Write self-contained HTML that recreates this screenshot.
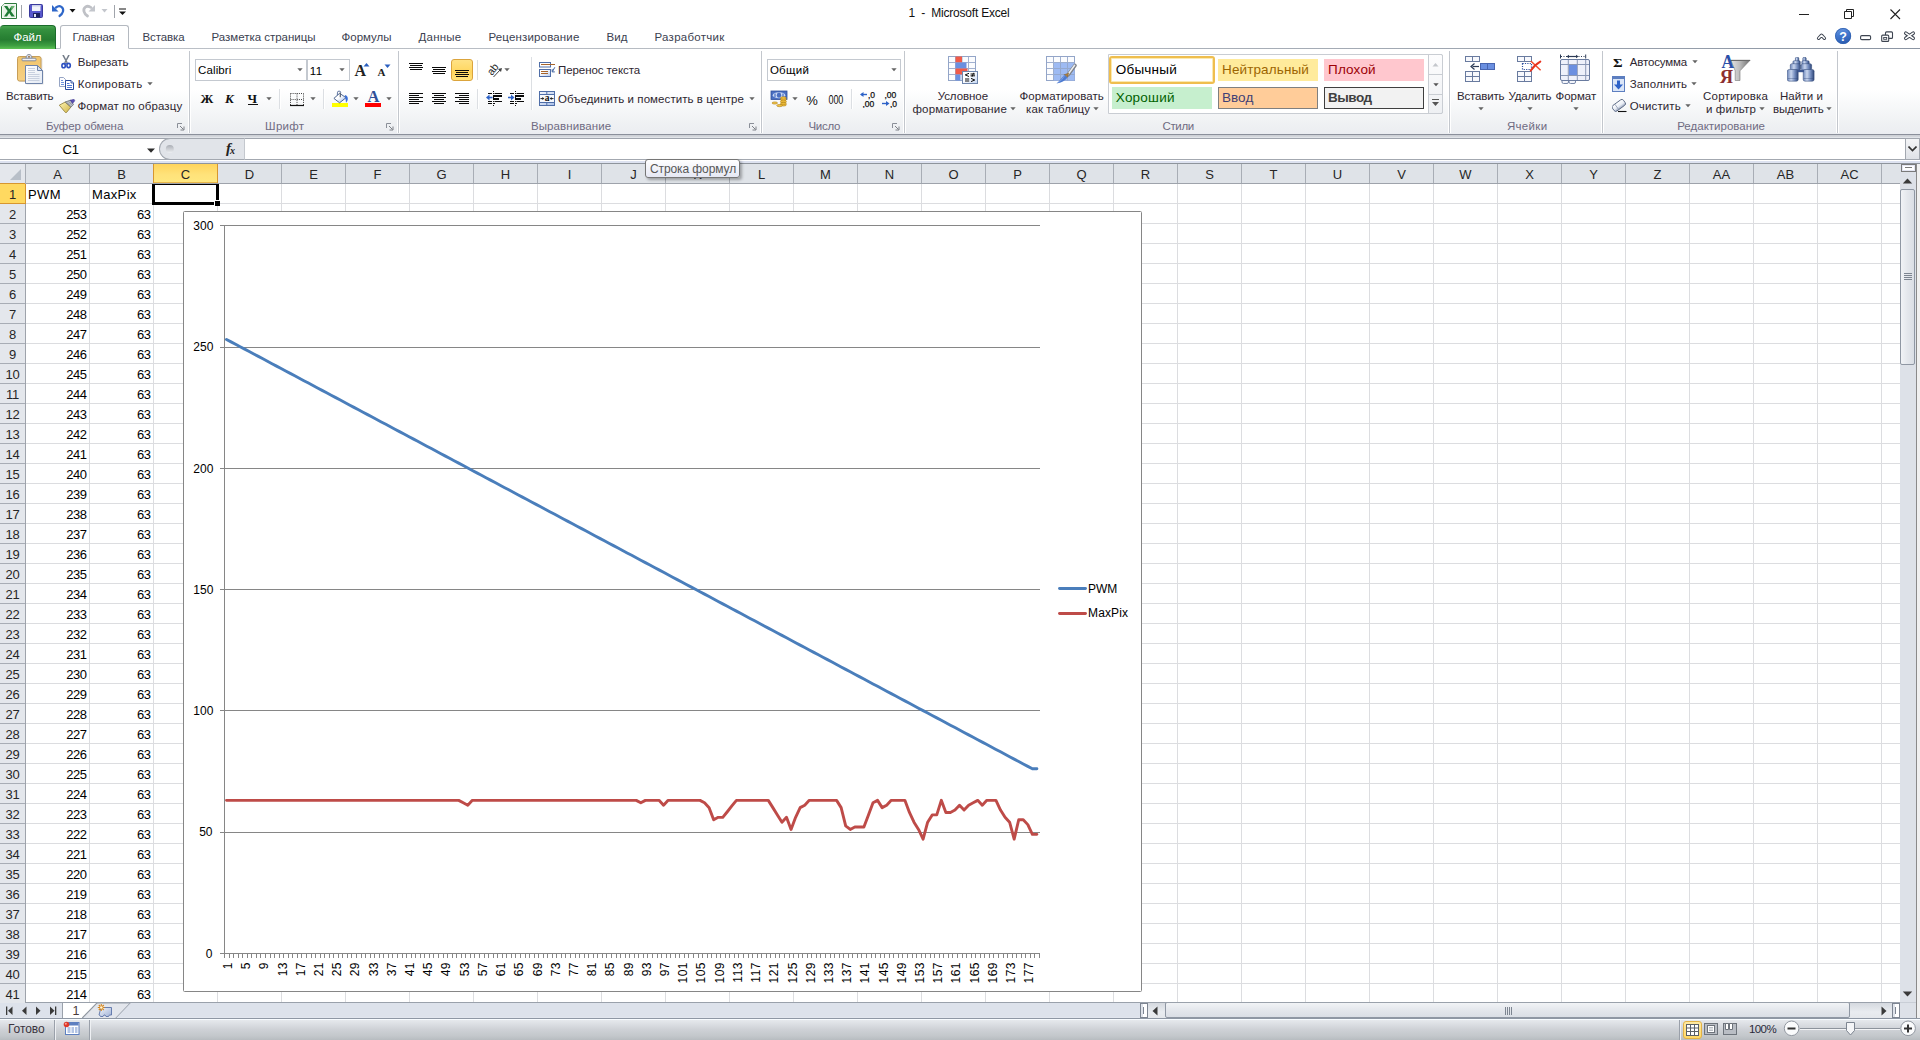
<!DOCTYPE html>
<html><head><meta charset="utf-8"><title>1 - Microsoft Excel</title>
<style>
*{box-sizing:border-box;margin:0;padding:0}
html,body{width:1920px;height:1040px;overflow:hidden;background:#fff;font-family:"Liberation Sans",sans-serif;font-size:12px}
.t{position:absolute;white-space:pre;}
.ct{font-family:"Liberation Sans",sans-serif;font-size:12px;fill:#000}
.a{position:absolute;display:block}
#title{position:absolute;left:0;top:0;width:1920px;height:25px;background:#fff}
#tabs{position:absolute;left:0;top:25px;width:1920px;height:24px;background:#fff;border-bottom:1px solid #b4b9c0;border-image:linear-gradient(90deg,#bcc1c8,#b4b9c0 50%,#8b95a3) 1}
#tabs .t,#tabs .a{margin-top:-25px}
#filetab{position:absolute;left:0;top:0;width:56px;height:24px;border-radius:4px 4px 0 0;background:linear-gradient(#48a54f 0,#35913f 15%,#2a8335 45%,#267d31 60%,#3d9f41 85%,#5cc253 100%);border:1px solid #1b6b2b;border-bottom:none;border-left:none}
#hometab{position:absolute;left:60px;top:0;width:68.500px;height:24px;border:1px solid #b4b9c0;border-bottom:1px solid #fff;border-radius:3px 3px 0 0;background:#fff}
#ribbon{position:absolute;left:0;top:49px;width:1920px;height:86px;background:linear-gradient(#fff 0,#fff 48%,#f8f9fa 65%,#f0f2f4 85%,#ebedf1 100%);border-bottom:1px solid #8b909b}
#ribbon .t,#ribbon .a,#ribbon .sep,#ribbon .combo{margin-top:-49px}
.gsep{position:absolute;top:2px;width:3px;height:82px;background:linear-gradient(90deg,#fff 33%,#c3c7cd 33%,#c3c7cd 67%,#fff 67%)}
.sep{position:absolute;width:2px;background:linear-gradient(90deg,#dcdfe3 50%,#fff 50%)}
.combo{position:absolute;background:#fff;border:1px solid #c4c9d0}
#selbtn{position:absolute;left:451px;top:10px;width:22px;height:22px;border:1px solid #dba43c;border-radius:3px;background:linear-gradient(#ffe285,#ffd968 45%,#ffd55f 60%,#ffe27c)}
#gal{position:absolute;left:1108px;top:5px;width:335px;height:60px;border:1px solid #c9cdd3;background:#fff;border-radius:0 2px 2px 0}
#galsb{position:absolute;left:1428px;top:5px;width:15px;height:60px;border:1px solid #c9cdd3;border-radius:0 2px 2px 0;background:linear-gradient(#fdfdfe,#eef0f3)}

#fbar{position:absolute;left:0;top:135px;width:1920px;height:29px;background:linear-gradient(#cdd0d6 0,#cdd0d6 1px,#d3d6db 1px,#d3d6db 2px,#e1e4e9 2px,#e1e4e9 3px,#9fa4ad 3px,#9fa4ad 4px,#fff 4px,#fff 24px,#a3a8b0 24px,#a3a8b0 25px,#fff 25px,#fff 26px,#dde2f0 26px,#dde2f0 28px,#8e949c 28px)}
#fbar .t,#fbar .a{margin-top:-135px}
#namebox{display:none}
#fxarea{position:absolute;left:159px;top:3px;width:86px;height:22px;background:#e1e4e9;border:1px solid #a3a8b0;border-radius:11px 0 0 11px;border-right:1px solid #c4c8ce}
#finput{display:none}
#fexp{position:absolute;left:1905px;top:3px;width:15px;height:22px;background:linear-gradient(#f4f5f7,#dfe2e7);border:1px solid #a3a8b0}
#fline{display:none}
#grid{position:absolute;left:0;top:164px;width:1900px;height:839px;overflow:hidden;background:#fff}
#colhdr{position:absolute;left:0;top:0;width:1902px;height:20px;background:#e4e7ec;border-bottom:1px solid #9ea3ab}
.corner{position:absolute;left:0;top:0;width:26px;height:20px;border-right:1px solid #a8adb5}
.ch{position:absolute;top:0;height:19px;border-right:1px solid #a8adb5;text-align:center;font-size:13px;line-height:21px;color:#262626;background:#dfe3e8}
.ch.sel{background:linear-gradient(#ffd45c,#ffe27a 55%,#ffe880);border-right:1px solid #d7962f;box-shadow:-1px 0 0 #d7962f, inset 0 -1px 0 #e7b54a}
#rowhdr{position:absolute;left:0;top:20px;width:26px;height:820px;background:#e4e7ec;border-right:1px solid #9ea3ab;z-index:1}
.rh{position:absolute;left:0;width:25px;height:20px;border-bottom:1px solid #a8adb5;text-align:center;font-size:13px;line-height:21px;color:#262626;letter-spacing:-0.2px}
.rh.sel{background:#ffd960;border-bottom-color:#d7962f;box-shadow:0 -1px 0 #d7962f,1px 0 0 #d7962f;z-index:2}
#cells{position:absolute;left:26px;top:20px;width:1874px;height:820px;
 background-image:linear-gradient(90deg,transparent 63px,#dcdde0 63px),linear-gradient(transparent 19px,#dcdde0 19px);background-size:64px 20px,64px 20px;background-position:0 0,0 0}
.c{position:absolute;width:63px;height:19px;font-size:13px;line-height:21px;color:#000;white-space:nowrap}
.c.r{text-align:right;padding-right:2.500px;letter-spacing:-0.45px}
.c.l{padding-left:2px;letter-spacing:0.35px}
#selbox{position:absolute;left:152px;top:20px;width:67px;height:21px;border:3px solid #000;border-top-width:1px}
#selh{position:absolute;left:214px;top:36px;width:6px;height:6px;background:#000;border-left:1px solid #fff;border-top:1px solid #fff;box-shadow:0 0 0 0 #fff}

#tip{position:absolute;left:645px;top:159px;width:95px;height:19px;border:1px solid #767676;border-radius:3px;background:linear-gradient(#fff,#e6e8f4);box-shadow:2px 2px 3px rgba(0,0,0,.3);z-index:9}
#tip span{position:absolute;left:4px;top:1.500px;font-size:12px;line-height:15px;color:#575757;white-space:nowrap;letter-spacing:-0.1px}
#vsb{position:absolute;left:1900px;top:164px;width:20px;height:855px;background:linear-gradient(90deg,#dde1e8 0,#dde1e8 16px,#8a8a8a 16px,#8a8a8a 17px,#f0f0f0 17px)}
.vsplit{position:absolute;left:1px;top:0;width:15px;height:8px;border:1px solid #7a7a7a;background:#fff;box-shadow:inset 0 0 0 1px #e4e6f2}
.vthumb{position:absolute;left:0;top:25px;width:15px;height:176px;border:1px solid #8f97a3;border-radius:2px;background:linear-gradient(90deg,#f1f3f6,#e4e7ec 50%,#dadee5)}
#tabbar{position:absolute;left:0;top:1002px;width:1900px;height:17px;background:#dde2eb;border-top:1px solid #9aa1ab;border-bottom:1px solid #8e97a4;box-shadow:inset 0 -1px 0 #e2e6ee;overflow:hidden}
#tabbar .a,#tabbar .t{}
#hsb{position:absolute;left:1140px;top:0;width:760px;height:15px;background:linear-gradient(#d5d9df,#e9ecf0 60%,#e4e7eb)}
.hsplit{position:absolute;top:0;width:8px;height:15px;border:1px solid #7d8591;background:#fff;box-shadow:inset 2px 0 0 #dfe3ea}
.hsplit:after{content:"";position:absolute;left:2px;top:3px;width:1px;height:7px;background:#7d8591}
.hthumb{position:absolute;left:25px;top:-1px;width:685px;height:16px;border:1px solid #8f97a3;border-radius:2px;background:linear-gradient(#f1f3f6,#e4e7ec 50%,#dadee5)}
#status{position:absolute;left:0;top:1019px;width:1920px;height:21px;background:linear-gradient(#f8fcff 0,#f8fcff 1px,#e6e9ed 1px,#d9dce1 6px,#cdd0d5 11px,#c3c7cb 17px,#b7bcc0 21px)}
.ssep{position:absolute;top:1px;width:2px;height:20px;background:linear-gradient(90deg,#9aa0aa 50%,#eef0f3 50%)}
#below{position:absolute;left:0;top:135px;width:1920px;height:29px;background:#e3e6ea}
</style></head><body>

<div id="title">
<svg class="a" style="left:0;top:0" width="130" height="24">
<path d="M4.500 3.500H16.500V18.500H1.500V6.500z" fill="#fff" stroke="#2d7a3c"/><rect x="2.500" y="4.500" width="13" height="13" fill="#e7f2e6"/>
<path d="M4 6h3.300l2 3.300L11.500 6h3l-3.700 5L14.800 16.500h-3.300L9.200 13 7 16.500H4l3.700-5.500z" fill="#1e7b34"/><path d="M11 6h3.500l-3 4.500z" fill="#6ab36f"/>
<path d="M21.500 5V18" stroke="#a0a4ab"/>
<rect x="29.500" y="4.500" width="13" height="13" rx="1" fill="#5858cc" stroke="#3a3a9c"/><rect x="32" y="5" width="8.500" height="6" fill="#f2f4fa"/><rect x="32" y="5" width="8.500" height="1.500" fill="#c9cfea"/><rect x="33" y="13" width="7" height="4.500" fill="#1c2260"/><rect x="34" y="14" width="2" height="3" fill="#dfe3f5"/>
<path d="M56 7.500c4-3 8 0 7 4-0.500 2-2 3.500-3.500 4.500" stroke="#2f67c9" stroke-width="2.200" fill="none" stroke-linecap="round"/><path d="M52 5v6.500h6.500z" fill="#2f67c9"/>
<path d="M69.500 9h6l-3 3.500z" fill="#111"/>
<path d="M91 7.500c-4-3-8 0-7 4 .5 2 2 3.500 3.500 4.500" stroke="#bfc1c6" stroke-width="2.800" fill="none" stroke-linecap="round"/><path d="M95 5v6.500h-6.500z" fill="#c3c6cc"/>
<path d="M101.500 9h6l-3 3.500z" fill="#c3c6cc"/>
<path d="M114.500 5V18" stroke="#a0a4ab"/>
<path d="M119 9h7" stroke="#111" stroke-width="1"/><path d="M119 11.500h7l-3.500 3.500z" fill="#111"/>
</svg>

<span class="t" style="left:908.5px;top:5.1px;font-size:12px;line-height:16.4px;color:#111;letter-spacing:-0.207px;">1  -  Microsoft Excel</span>
<svg class="a" style="left:1790px;top:0" width="130" height="25"><path d="M1799 14.5H1809" transform="translate(-1790 0)" stroke="#222" fill="none"/><g transform="translate(-1790 0)" stroke="#222" fill="none"><path d="M1844.5 11.5h7v7h-7z"/><path d="M1846.5 11.5V9.5h7v7h-2"/><path d="M1890.5 9.5l9.5 9.5M1900 9.5l-9.5 9.5" stroke-width="1.1"/></g></svg>
</div>
<div id="tabs">
<div id="filetab"></div>
<span class="t" style="left:13.5px;top:29.9px;font-size:11.5px;line-height:15.8px;color:#fff;letter-spacing:-0.068px;">Файл</span>
<div id="hometab"></div>
<span class="t" style="left:72.5px;top:29.9px;font-size:11.5px;line-height:15.8px;color:#3b4150;letter-spacing:-0.253px;">Главная</span>
<span class="t" style="left:142.5px;top:29.9px;font-size:11.5px;line-height:15.8px;color:#3b4150;letter-spacing:-0.106px;">Вставка</span>
<span class="t" style="left:211.5px;top:29.9px;font-size:11.5px;line-height:15.8px;color:#3b4150;letter-spacing:-0.019px;">Разметка страницы</span>
<span class="t" style="left:341.5px;top:29.9px;font-size:11.5px;line-height:15.8px;color:#3b4150;letter-spacing:-0.006px;">Формулы</span>
<span class="t" style="left:418.5px;top:29.9px;font-size:11.5px;line-height:15.8px;color:#3b4150;letter-spacing:0.242px;">Данные</span>
<span class="t" style="left:488.5px;top:29.9px;font-size:11.5px;line-height:15.8px;color:#3b4150;letter-spacing:0.157px;">Рецензирование</span>
<span class="t" style="left:606.5px;top:29.9px;font-size:11.5px;line-height:15.8px;color:#3b4150;letter-spacing:0.065px;">Вид</span>
<span class="t" style="left:654.5px;top:29.9px;font-size:11.5px;line-height:15.8px;color:#3b4150;letter-spacing:0.267px;">Разработчик</span>
<svg class="a" style="left:1810px;top:25px" width="110" height="23"><defs><linearGradient id="hq" x1="0" y1="0" x2="0.300" y2="1"><stop offset="0" stop-color="#6e9be0"/><stop offset=".5" stop-color="#4378cf"/><stop offset="1" stop-color="#2d5fb4"/></linearGradient></defs><g transform="translate(-1810 -25)"><path d="M1818.600 38.300L1821.500 35.200 1824.400 38.300" stroke="#3d4450" stroke-width="3.400" fill="none" stroke-linejoin="round" stroke-linecap="round"/><path d="M1818.600 38.300L1821.500 35.200 1824.400 38.300" stroke="#fff" stroke-width="1.500" fill="none" stroke-linejoin="round" stroke-linecap="round"/><circle cx="1843.100" cy="36" r="8" fill="url(#hq)"/><circle cx="1843.100" cy="36" r="7.600" fill="none" stroke="#2f5fae" stroke-width=".8"/><text x="1843.100" y="40.600" text-anchor="middle" font-family="Liberation Sans" font-weight="bold" font-size="12.500" fill="#fff">?</text><rect x="1860.600" y="35.600" width="10" height="4" rx="1.200" fill="#fff" stroke="#3d4450" stroke-width="1.100"/><rect x="1885.500" y="31.900" width="7" height="6.500" rx="1" fill="#fff" stroke="#3d4450" stroke-width="1.100"/><rect x="1881.700" y="35.100" width="7" height="6.300" rx="1" fill="#fff" stroke="#3d4450" stroke-width="1.100"/><rect x="1883.700" y="37.500" width="3" height="1.800" fill="#fff" stroke="#3d4450" stroke-width=".9"/><path d="M1905.800 33.200L1913.200 38.300M1913.200 33.200L1905.800 38.300" stroke="#3d4450" stroke-width="3.600" fill="none" stroke-linecap="round"/><path d="M1905.800 33.200L1913.200 38.300M1913.200 33.200L1905.800 38.300" stroke="#fff" stroke-width="1.600" fill="none" stroke-linecap="round"/></g></svg>
</div>
<div id="ribbon">
<div class="gsep" style="left:188px"></div>
<div class="gsep" style="left:397px"></div>
<div class="gsep" style="left:760px"></div>
<div class="gsep" style="left:903px"></div>
<div class="gsep" style="left:1448px"></div>
<div class="gsep" style="left:1601px"></div>
<div class="gsep" style="left:1836px"></div>
<span class="t" style="left:46.1px;top:118.9px;font-size:11.5px;line-height:15.8px;color:#6f6b82;letter-spacing:-0.087px;">Буфер обмена</span>
<span class="t" style="left:265.1px;top:118.9px;font-size:11.5px;line-height:15.8px;color:#6f6b82;letter-spacing:0.253px;">Шрифт</span>
<span class="t" style="left:531.0px;top:118.9px;font-size:11.5px;line-height:15.8px;color:#6f6b82;letter-spacing:0.079px;">Выравнивание</span>
<span class="t" style="left:808.5px;top:118.9px;font-size:11.5px;line-height:15.8px;color:#6f6b82;letter-spacing:-0.295px;">Число</span>
<span class="t" style="left:1162.5px;top:118.9px;font-size:11.5px;line-height:15.8px;color:#6f6b82;letter-spacing:-0.366px;">Стили</span>
<span class="t" style="left:1506.9px;top:118.9px;font-size:11.5px;line-height:15.8px;color:#6f6b82;letter-spacing:0.338px;">Ячейки</span>
<span class="t" style="left:1677.2px;top:118.9px;font-size:11.5px;line-height:15.8px;color:#6f6b82;letter-spacing:0.014px;">Редактирование</span>
<svg class="a" style="left:177px;top:123px" width="8" height="8"><path d="M0.5 5V0.5H5" stroke="#8a8f98" fill="none"/><path d="M3 3L6.5 6.5M7 3.5V7H3.5" stroke="#7c8087" fill="none"/></svg>
<svg class="a" style="left:386px;top:123px" width="8" height="8"><path d="M0.5 5V0.5H5" stroke="#8a8f98" fill="none"/><path d="M3 3L6.5 6.5M7 3.5V7H3.5" stroke="#7c8087" fill="none"/></svg>
<svg class="a" style="left:749px;top:123px" width="8" height="8"><path d="M0.5 5V0.5H5" stroke="#8a8f98" fill="none"/><path d="M3 3L6.5 6.5M7 3.5V7H3.5" stroke="#7c8087" fill="none"/></svg>
<svg class="a" style="left:892px;top:123px" width="8" height="8"><path d="M0.5 5V0.5H5" stroke="#8a8f98" fill="none"/><path d="M3 3L6.5 6.5M7 3.5V7H3.5" stroke="#7c8087" fill="none"/></svg>
<span class="t" style="left:6.0px;top:89.3px;font-size:11.5px;line-height:15.8px;color:#2e2630;letter-spacing:-0.168px;">Вставить</span>
<svg class="a" style="left:26.9px;top:106.7px" width="6" height="4"><path d="M0.300 0.300H5.700L3 3.300Z" fill="#646464"/></svg>
<span class="t" style="left:77.8px;top:54.9px;font-size:11.5px;line-height:15.8px;color:#2e2630;letter-spacing:-0.069px;">Вырезать</span>
<span class="t" style="left:77.8px;top:76.9px;font-size:11.5px;line-height:15.8px;color:#2e2630;letter-spacing:0.268px;">Копировать</span>
<svg class="a" style="left:147.1px;top:82.1px" width="6" height="4"><path d="M0.300 0.300H5.700L3 3.300Z" fill="#646464"/></svg>
<span class="t" style="left:77.4px;top:99.2px;font-size:11.5px;line-height:15.8px;color:#2e2630;letter-spacing:0.105px;">Формат по образцу</span>
<div class="combo" style="left:195px;top:59px;width:112px;height:22px"></div><div class="combo" style="left:307px;top:59px;width:43px;height:22px"></div>
<span class="t" style="left:198.0px;top:63.1px;font-size:11.5px;line-height:15.8px;color:#000;letter-spacing:0.130px;">Calibri</span>
<svg class="a" style="left:296.8px;top:68.2px" width="6" height="4"><path d="M0.300 0.300H5.700L3 3.300Z" fill="#646464"/></svg>
<span class="t" style="left:309.800px;top:63.300px;font-size:11.500px;line-height:16px;color:#000;letter-spacing:0.3px">11</span>
<svg class="a" style="left:339.4px;top:68.2px" width="6" height="4"><path d="M0.300 0.300H5.700L3 3.300Z" fill="#646464"/></svg>
<span class="t" style="left:354.5px;top:60.0px;font-size:16px;line-height:21.2px;color:#222;letter-spacing:0.445px;font-weight:bold;font-family:'Liberation Serif',serif;">A</span>
<span class="t" style="left:377.5px;top:64.7px;font-size:11px;line-height:15.2px;color:#222;letter-spacing:0.656px;font-weight:bold;font-family:'Liberation Serif',serif;">A</span>
<svg class="a" style="left:363px;top:62px" width="8" height="5"><path d="M0.5 4.5L3.5 1 6.5 4.5Z" fill="#2a5fc0"/></svg>
<svg class="a" style="left:384px;top:63.500px" width="8" height="5"><path d="M0.5 0.5L3.5 4 6.5 0.5Z" fill="#2a5fc0"/></svg>
<span class="t" style="left:200.5px;top:90.3px;font-size:13px;line-height:17.6px;color:#111;letter-spacing:1.846px;font-weight:bold;font-family:'Liberation Serif',serif;">Ж</span>
<span class="t" style="left:224.9px;top:90.3px;font-size:13px;line-height:17.6px;color:#111;letter-spacing:3.383px;font-weight:bold;font-style:italic;font-family:'Liberation Serif',serif;">К</span>
<span class="t" style="left:247.5px;top:90.3px;font-size:13px;line-height:17.6px;color:#111;letter-spacing:0.459px;font-weight:bold;font-family:'Liberation Serif',serif;">Ч</span>
<div class="a" style="left:248px;top:104px;width:10px;height:1px;background:#111"></div>
<svg class="a" style="left:265.9px;top:97.1px" width="6" height="4"><path d="M0.300 0.300H5.700L3 3.300Z" fill="#646464"/></svg>
<div class="sep" style="left:279px;top:89px;height:20px"></div>
<svg class="a" style="left:290px;top:92px" width="14" height="15"><path d="M0.5 1.5H13.5M0.5 7.5H13.5M0.5 1.5V13M7 1.5V13M13.5 1.5V13" stroke="#444" stroke-dasharray="1 1.1" fill="none"/><path d="M0 13.5H14" stroke="#111" stroke-width="1.2"/></svg>
<svg class="a" style="left:309.9px;top:97.1px" width="6" height="4"><path d="M0.300 0.300H5.700L3 3.300Z" fill="#646464"/></svg>
<div class="sep" style="left:323px;top:89px;height:20px"></div>
<svg class="a" style="left:331px;top:90px" width="18" height="18"><defs><linearGradient id="bk" x1="0" y1="0" x2="1" y2="1"><stop offset=".45" stop-color="#fff"/><stop offset="1" stop-color="#7fa3e6"/></linearGradient></defs><rect x="1" y="13" width="16" height="4" fill="#ffff00"/><path d="M2.900 8.400L8.600 3.300 15 7.700 8.600 12.800z" fill="url(#bk)" stroke="#3b5585" stroke-width=".9" stroke-linejoin="round"/><path d="M6.400 5.200V2.800a1.700 1.700 0 0 1 3.400 0" stroke="#4f6796" stroke-width=".9" fill="none"/><path d="M9.300 2.800V7.300" stroke="#55606f" stroke-width="1.200"/><path d="M13.800 5c2.200.3 3.300 2.300 3 4.200-.2 1.400-1 2.600-1.800 3.500-.2-1.500-.3-3-.6-4.200-.2-1.200-.5-2.500-.6-3.500z" fill="#3a6fd8"/></svg>
<svg class="a" style="left:352.8px;top:97.1px" width="6" height="4"><path d="M0.300 0.300H5.700L3 3.300Z" fill="#646464"/></svg>
<div class="a" style="left:365px;top:103px;width:16px;height:4px;background:#ff0000"></div>
<span class="t" style="left:367.5px;top:86.3px;font-size:16.5px;line-height:21.8px;color:#2f4f98;letter-spacing:0.584px;font-weight:bold;font-family:'Liberation Serif',serif;">A</span>
<svg class="a" style="left:385.9px;top:97.1px" width="6" height="4"><path d="M0.300 0.300H5.700L3 3.300Z" fill="#646464"/></svg>
<div class="a" style="left:409px;top:63px;width:14px;height:1px;background:#0a0a0a"></div><div class="a" style="left:410px;top:65px;width:12px;height:1px;background:#0a0a0a"></div><div class="a" style="left:409px;top:67px;width:14px;height:1px;background:#0a0a0a"></div><div class="a" style="left:410px;top:69px;width:12px;height:1px;background:#0a0a0a"></div>
<div class="a" style="left:432px;top:67px;width:14px;height:1px;background:#0a0a0a"></div><div class="a" style="left:433px;top:69px;width:12px;height:1px;background:#0a0a0a"></div><div class="a" style="left:432px;top:71px;width:14px;height:1px;background:#0a0a0a"></div><div class="a" style="left:433px;top:73px;width:12px;height:1px;background:#0a0a0a"></div>
<div id="selbtn"></div>
<div class="a" style="left:455px;top:70px;width:14px;height:1px;background:#0a0a0a"></div><div class="a" style="left:456px;top:72px;width:12px;height:1px;background:#0a0a0a"></div><div class="a" style="left:455px;top:74px;width:14px;height:1px;background:#0a0a0a"></div><div class="a" style="left:456px;top:76px;width:12px;height:1px;background:#0a0a0a"></div>
<div class="sep" style="left:477px;top:60px;height:20px"></div>
<div class="sep" style="left:477px;top:89px;height:20px"></div>
<div class="sep" style="left:531px;top:57px;height:53px"></div>
<div class="a" style="left:409px;top:93px;width:14px;height:1px;background:#0a0a0a"></div><div class="a" style="left:409px;top:95px;width:10px;height:1px;background:#0a0a0a"></div><div class="a" style="left:409px;top:97px;width:14px;height:1px;background:#0a0a0a"></div><div class="a" style="left:409px;top:99px;width:10px;height:1px;background:#0a0a0a"></div><div class="a" style="left:409px;top:101px;width:14px;height:1px;background:#0a0a0a"></div><div class="a" style="left:409px;top:103px;width:10px;height:1px;background:#0a0a0a"></div>
<div class="a" style="left:432px;top:93px;width:14px;height:1px;background:#0a0a0a"></div><div class="a" style="left:434px;top:95px;width:10px;height:1px;background:#0a0a0a"></div><div class="a" style="left:432px;top:97px;width:14px;height:1px;background:#0a0a0a"></div><div class="a" style="left:434px;top:99px;width:10px;height:1px;background:#0a0a0a"></div><div class="a" style="left:432px;top:101px;width:14px;height:1px;background:#0a0a0a"></div><div class="a" style="left:434px;top:103px;width:10px;height:1px;background:#0a0a0a"></div>
<div class="a" style="left:455px;top:93px;width:14px;height:1px;background:#0a0a0a"></div><div class="a" style="left:459px;top:95px;width:10px;height:1px;background:#0a0a0a"></div><div class="a" style="left:455px;top:97px;width:14px;height:1px;background:#0a0a0a"></div><div class="a" style="left:459px;top:99px;width:10px;height:1px;background:#0a0a0a"></div><div class="a" style="left:455px;top:101px;width:14px;height:1px;background:#0a0a0a"></div><div class="a" style="left:459px;top:103px;width:10px;height:1px;background:#0a0a0a"></div>
<svg class="a" style="left:486px;top:62px" width="18" height="17"><text transform="translate(6 14) rotate(-52)" font-family="Liberation Sans" font-size="10.500" fill="#222">ab</text><path d="M7.500 15L14.500 7.500" stroke="#444" fill="none"/><path d="M16 6l-4 1 3 3z" fill="#444"/></svg>
<svg class="a" style="left:503.9px;top:68.2px" width="6" height="4"><path d="M0.300 0.300H5.700L3 3.300Z" fill="#646464"/></svg>
<svg class="a" style="left:538px;top:61px" width="18" height="17"><defs><linearGradient id="wb" x1="0" y1="0" x2="1" y2="1"><stop offset=".3" stop-color="#fff"/><stop offset="1" stop-color="#b9cbec"/></linearGradient></defs><rect x="1.500" y="1.500" width="11" height="4.500" fill="#fff" stroke="#4f6ea8"/><path d="M3 3.500H17" stroke="#a8642a" stroke-width="1"/><rect x="1.500" y="8.500" width="11" height="7" fill="url(#wb)" stroke="#4f6ea8"/><path d="M3 10.500H10M3 12.500H10" stroke="#a8642a" stroke-width="1"/><path d="M16.800 6.300L14.600 10.300" stroke="#3b5f9c" stroke-width="1" fill="none"/><path d="M14.200 8.200v2.700h2.600" stroke="#3b5f9c" fill="none" stroke-width="1"/></svg>
<span class="t" style="left:558.0px;top:63.4px;font-size:11.5px;line-height:15.8px;color:#2e2630;letter-spacing:-0.080px;">Перенос текста</span>
<svg class="a" style="left:486px;top:91px" width="17" height="15"><path d="M7.500 0V15" stroke="#111" stroke-dasharray="1 1"/><path d="M2 2.500H6M8.500 2.500H16M2 10.500H6M8.500 10.500H16M2 12.500H6M7 12.500H9" stroke="#0a0a0a"/><path d="M7 5H16M7 8H13" stroke="#0a0a0a" stroke-width="2"/><path d="M2.500 6.500H6.500" stroke="#2d62c8" stroke-width="1.600"/><path d="M3.500 3.500L0 6.500l3.500 3z" fill="#2d62c8"/></svg>
<svg class="a" style="left:508px;top:91px" width="17" height="15"><path d="M7.500 0V15" stroke="#111" stroke-dasharray="1 1"/><path d="M2 2.500H6M8.500 2.500H16M2 10.500H6M8.500 10.500H16M2 12.500H6M7 12.500H9" stroke="#0a0a0a"/><path d="M7 5H16M7 8H13" stroke="#0a0a0a" stroke-width="2"/><path d="M0 6.500H4" stroke="#2d62c8" stroke-width="1.600"/><path d="M3 3.500l3.500 3-3.500 3z" fill="#2d62c8"/></svg>
<svg class="a" style="left:538px;top:90px" width="18" height="17"><defs><linearGradient id="mg" x1="0" y1="0" x2="1" y2="1"><stop offset="0" stop-color="#f6f8fd"/><stop offset="1" stop-color="#a9bfe8"/></linearGradient></defs><rect x="1.500" y="1.500" width="15" height="14" fill="url(#mg)" stroke="#4f6ea8"/><rect x="2" y="5" width="14" height="7" fill="#f7f9fd"/><path d="M1.500 4.500H16.500M1.500 12.500H16.500M8.800 1.500V4.500M8.800 12.500V15.500" stroke="#4f6ea8"/><text x="9" y="11.400" text-anchor="middle" font-family="Liberation Serif" font-weight="bold" font-size="9.500" fill="#111">a</text><path d="M2.500 8.600H5.500M12.500 8.600H15.500" stroke="#222" stroke-width="1"/><path d="M4.300 7.100l2 1.500-2 1.500zM13.700 7.100l-2 1.500 2 1.500z" fill="#222"/></svg>
<span class="t" style="left:558.0px;top:91.9px;font-size:11.5px;line-height:15.8px;color:#2e2630;letter-spacing:0.069px;">Объединить и поместить в центре</span>
<svg class="a" style="left:748.7px;top:97.1px" width="6" height="4"><path d="M0.300 0.300H5.700L3 3.300Z" fill="#646464"/></svg>
<div class="combo" style="left:767px;top:59px;width:134px;height:22px"></div>
<span class="t" style="left:769.9px;top:63.1px;font-size:11.5px;line-height:15.8px;color:#000;letter-spacing:0.272px;">Общий</span>
<svg class="a" style="left:890.6px;top:68.2px" width="6" height="4"><path d="M0.300 0.300H5.700L3 3.300Z" fill="#646464"/></svg>
<svg class="a" style="left:770px;top:90px" width="18" height="18"><rect x="1" y="1" width="16" height="8.500" fill="#4a6fc2" stroke="#2f4f9c" stroke-width=".8"/><ellipse cx="9" cy="5.200" rx="6.200" ry="3" fill="#c9d8f4"/><ellipse cx="9" cy="5.200" rx="2.200" ry="2.600" fill="#4a6fc2"/><path d="M5 3.500v3.500M13 3.500v3.500" stroke="#4a6fc2" stroke-width="1.200"/><ellipse cx="13.400" cy="14.8" rx="3" ry="1.200" fill="#f5c542" stroke="#a9790f" stroke-width=".6"/><ellipse cx="13.400" cy="13.1" rx="3" ry="1.200" fill="#f5c542" stroke="#a9790f" stroke-width=".6"/><ellipse cx="13.400" cy="11.4" rx="3" ry="1.200" fill="#f5c542" stroke="#a9790f" stroke-width=".6"/><ellipse cx="13.400" cy="9.7" rx="3" ry="1.200" fill="#f5c542" stroke="#a9790f" stroke-width=".6"/><ellipse cx="13.400" cy="8.0" rx="3" ry="1.200" fill="#f5c542" stroke="#a9790f" stroke-width=".6"/><ellipse cx="4.800" cy="13" rx="2.800" ry="1.100" fill="#f5c542" stroke="#a9790f" stroke-width=".6"/><ellipse cx="9.500" cy="15.600" rx="2.800" ry="1.100" fill="#f5c542" stroke="#a9790f" stroke-width=".6"/></svg>
<svg class="a" style="left:791.9px;top:97.1px" width="6" height="4"><path d="M0.300 0.300H5.700L3 3.300Z" fill="#646464"/></svg>
<span class="t" style="left:806.2px;top:91.5px;font-size:13px;line-height:17.6px;color:#111;letter-spacing:0.840px;">%</span>
<span class="t" style="left:828.500px;top:93.500px;font-size:9px;line-height:12px;color:#111;transform:scaleY(1.4);letter-spacing:-0.1px">000</span>
<div class="sep" style="left:851px;top:89px;height:20px"></div>
<svg class="a" style="left:859px;top:90px" width="18" height="18"><path d="M2 4.5H8" stroke="#2d62c8" stroke-width="1.4"/><path d="M4.5 2L1 4.5l3.5 2.5z" fill="#2d62c8"/><text x="9" y="8" font-family="Liberation Sans" font-size="8.500" fill="#111" stroke="#111" stroke-width=".25">,0</text><text x="3.5" y="17" font-family="Liberation Sans" font-size="8.500" fill="#111" stroke="#111" stroke-width=".25">,00</text></svg>
<svg class="a" style="left:881px;top:90px" width="18" height="18"><path d="M1 13.5H7" stroke="#2d62c8" stroke-width="1.4"/><path d="M5 11l3.5 2.5L5 16z" fill="#2d62c8"/><text x="3.5" y="8" font-family="Liberation Sans" font-size="8.500" fill="#111" stroke="#111" stroke-width=".25">,00</text><text x="9" y="17" font-family="Liberation Sans" font-size="8.500" fill="#111" stroke="#111" stroke-width=".25">,0</text></svg>
<svg class="a" style="left:948px;top:56px" width="31" height="29"><rect x="0.500" y="0.500" width="27" height="24" fill="#fbfcfe" stroke="#93a5c8"/><path d="M7.500 0.500V24.500M14 0.500V24.500M20.500 0.500V24.500M0.500 6.500H27.500M0.500 12.500H27.500M0.500 18.500H27.500" stroke="#93a5c8" opacity=".85"/><rect x="7.500" y="0.500" width="6.500" height="6" fill="#f05a48"/><rect x="7.500" y="6.500" width="11" height="6" fill="#6a8fe0"/><rect x="7.500" y="12.500" width="12" height="6" fill="#f05a48"/><rect x="7.500" y="18.500" width="5" height="6" fill="#6a8fe0"/><defs><linearGradient id="cfb" x1="0" y1="0" x2="1" y2="1"><stop offset=".4" stop-color="#fff"/><stop offset="1" stop-color="#c3d6f3"/></linearGradient></defs><rect x="14.500" y="15.500" width="15" height="12" fill="url(#cfb)" stroke="#6f86ad"/><path d="M21 17.300l-3.800 1.600 3.800 1.600M22.500 18h4.500M22.500 19.800h4.500M25.600 16.800l-1.600 4M17 23h4.200M17 25h4.200M23 22.400l3.800 1.600-3.800 1.600" stroke="#111" stroke-width="1" fill="none"/></svg>
<span class="t" style="left:937.7px;top:89.4px;font-size:11.5px;line-height:15.8px;color:#2e2630;letter-spacing:-0.059px;">Условное</span>
<span class="t" style="left:912.5px;top:102.2px;font-size:11.5px;line-height:15.8px;color:#2e2630;letter-spacing:0.155px;">форматирование</span>
<svg class="a" style="left:1009.7px;top:106.7px" width="6" height="4"><path d="M0.300 0.300H5.700L3 3.300Z" fill="#646464"/></svg>
<svg class="a" style="left:1046px;top:56px" width="32" height="29"><rect x="0.500" y="0.500" width="28" height="24" fill="#fbfcfe" stroke="#93a5c8"/><rect x="7.500" y="6.500" width="21" height="18" fill="#9dbaf3"/><path d="M7.500 0.500V24.500M14.500 0.500V24.500M21.500 0.500V24.500M0.500 6.500H28.500M0.500 12.500H28.500M0.500 18.500H28.500" stroke="#93a5c8" opacity=".85"/><path d="M29 9.500L22 19" stroke="#7f8288" stroke-width="3.600" stroke-linecap="round"/><path d="M28.600 9.300L22 18.500" stroke="#eceef1" stroke-width="1.500" stroke-linecap="round"/><path d="M22.800 17.200l-4.800 1.600 2.800 3.200z" fill="#b08040" stroke="#7f5a24" stroke-width=".5"/><path d="M18.500 18.500l3 3C19 25 15.500 27 10.500 27.400c3-2.400 5.500-5.400 8-8.900z" fill="#4d7bd1"/><path d="M18.500 19.500c-1.500 3-3.500 5-6 7" stroke="#86a7e6" stroke-width=".8" fill="none"/></svg>
<span class="t" style="left:1019.4px;top:89.4px;font-size:11.5px;line-height:15.8px;color:#2e2630;letter-spacing:0.081px;">Форматировать</span>
<span class="t" style="left:1026.1px;top:102.2px;font-size:11.5px;line-height:15.8px;color:#2e2630;letter-spacing:0.093px;">как таблицу</span>
<svg class="a" style="left:1092.8px;top:106.7px" width="6" height="4"><path d="M0.300 0.300H5.700L3 3.300Z" fill="#646464"/></svg>
<div id="gal"></div><div id="galsb"></div><div class="a" style="left:1429px;top:74px;width:14px;height:1px;background:#c9cdd3"></div><div class="a" style="left:1429px;top:94px;width:14px;height:1px;background:#c9cdd3"></div>
<div class="a" style="left:1109px;top:56px;width:106px;height:28px;border:2px solid #efbe4e;border-radius:3px;box-shadow:inset 0 0 0 1px #fbe9b0;background:#fff"></div>
<span class="t" style="left:1115.8px;top:60.7px;font-size:13.5px;line-height:18.2px;color:#000;letter-spacing:0.204px;">Обычный</span>
<div class="a" style="left:1218px;top:59px;width:100px;height:22px;background:#ffeb9c"></div>
<span class="t" style="left:1222.0px;top:60.7px;font-size:13.5px;line-height:18.2px;color:#9c6500;letter-spacing:0.127px;">Нейтральный</span>
<div class="a" style="left:1324px;top:59px;width:100px;height:22px;background:#ffc7ce"></div>
<span class="t" style="left:1328.0px;top:60.7px;font-size:13.5px;line-height:18.2px;color:#9c0006;letter-spacing:0.177px;">Плохой</span>
<div class="a" style="left:1112px;top:87px;width:100px;height:22px;background:#c6efce"></div>
<span class="t" style="left:1115.8px;top:89.3px;font-size:13.5px;line-height:18.2px;color:#006100;letter-spacing:0.230px;">Хороший</span>
<div class="a" style="left:1218px;top:87px;width:100px;height:22px;background:#ffcc99;border:1px solid #7f7f7f"></div>
<span class="t" style="left:1222.0px;top:89.3px;font-size:13.5px;line-height:18.2px;color:#3f3f76;letter-spacing:0.047px;">Ввод</span>
<div class="a" style="left:1324px;top:87px;width:100px;height:22px;background:#f2f2f2;border:1px solid #3f3f3f"></div>
<span class="t" style="left:1328.0px;top:89.3px;font-size:13.5px;line-height:18.2px;color:#3f3f3f;letter-spacing:-0.507px;font-weight:bold;">Вывод</span>
<svg class="a" style="left:1432px;top:62px" width="8" height="5"><path d="M0.5 4.5L3.5 1 6.5 4.5Z" fill="#c4c7cc"/></svg>
<svg class="a" style="left:1432.9px;top:82.9px" width="6" height="4"><path d="M0.300 0.300H5.700L3 3.300Z" fill="#555"/></svg>
<svg class="a" style="left:1432px;top:99px" width="8" height="8"><path d="M0 0.5H7" stroke="#555"/><path d="M0 3H7L3.5 7Z" fill="#555"/></svg>
<svg class="a" style="left:1465px;top:56px" width="31" height="27"><g fill="#f8f9fd" stroke="#697b9f"><rect x="0.500" y="0.500" width="14" height="5"/><rect x="0.500" y="15.500" width="14" height="10"/></g><path d="M7.500 0.500V5.500M7.500 15.500V25.500M0.500 20.500H14.500" stroke="#697b9f"/><rect x="15.500" y="7.500" width="14" height="6" fill="#6a8fe0" stroke="#4865b0"/><path d="M22.500 7.500V13.500" stroke="#4865b0"/><path d="M7.500 10.500H14" stroke="#2c3a55" stroke-width="1.200"/><path d="M9.500 7.500L6 10.500l3.500 3" stroke="#2c3a55" stroke-width="1.200" fill="none"/></svg>
<span class="t" style="left:1457.0px;top:89.4px;font-size:11.5px;line-height:15.8px;color:#2e2630;letter-spacing:-0.168px;">Вставить</span>
<svg class="a" style="left:1477.9px;top:106.7px" width="6" height="4"><path d="M0.300 0.300H5.700L3 3.300Z" fill="#646464"/></svg>
<svg class="a" style="left:1517px;top:56px" width="25" height="27"><g fill="#f8f9fd" stroke="#697b9f"><rect x="0.500" y="0.500" width="14" height="5"/><rect x="0.500" y="15.500" width="14" height="10"/></g><path d="M7.500 0.500V5.500M7.500 15.500V25.500M0.500 20.500H14.500" stroke="#697b9f"/><rect x="5.500" y="7.500" width="9" height="6" fill="none" stroke="#2f4fa0" stroke-width="1.200" stroke-dasharray="1.200 1.200"/><path d="M13.800 5L23.600 14.200" stroke="#f0482a" stroke-width="1.500"/><path d="M23.300 5.600C19 8 16 11 13.800 14.600" stroke="#e8321e" stroke-width="2" fill="none" stroke-linecap="round"/></svg>
<span class="t" style="left:1508.5px;top:89.4px;font-size:11.5px;line-height:15.8px;color:#2e2630;letter-spacing:-0.158px;">Удалить</span>
<svg class="a" style="left:1526.8px;top:106.7px" width="6" height="4"><path d="M0.300 0.300H5.700L3 3.300Z" fill="#646464"/></svg>
<svg class="a" style="left:1559px;top:54px" width="32" height="31"><path d="M2 2.500H27" stroke="#2c3a55" stroke-dasharray="1 1.500"/><path d="M9 2.500H18" stroke="#2c3a55" stroke-width="1.200"/><path d="M10 0.800L7.500 2.500 10 4.200zM17 0.800L19.500 2.500 17 4.200z" fill="#2c3a55"/><path d="M1.500 0.500V4.500M26.700 0.500V4.500" stroke="#2c3a55"/><path d="M3 26.500v1.500q0 1.500 1.500 1.500h3.500q1.500 0 1.500-1.500v-1.500M10 26.500v1.500q0 1.500 1.500 1.500h3.500q1.500 0 1.500-1.500v-1.500" fill="#f3f5fb" stroke="#697b9f" stroke-width=".9"/><rect x="1.500" y="5.500" width="29" height="21" rx="1.500" fill="#eef1fa" stroke="#697b9f"/><path d="M9.300 5.500V26.500M18.300 5.500V26.500M26.700 5.500V26.500M1.500 10.500H30.500M1.500 21.500H30.500" stroke="#697b9f" opacity=".75"/><rect x="10" y="11" width="8" height="10" fill="#6a8fe0"/></svg>
<span class="t" style="left:1555.5px;top:89.4px;font-size:11.5px;line-height:15.8px;color:#2e2630;letter-spacing:-0.025px;">Формат</span>
<svg class="a" style="left:1572.7px;top:106.7px" width="6" height="4"><path d="M0.300 0.300H5.700L3 3.300Z" fill="#646464"/></svg>
<span class="t" style="left:1613.3px;top:54.5px;font-size:12px;line-height:16.4px;color:#111;letter-spacing:0.354px;font-weight:bold;font-family:'Liberation Serif',serif;transform:scaleX(1.22);transform-origin:0 50%;">Σ</span>
<span class="t" style="left:1629.8px;top:55.0px;font-size:11.5px;line-height:15.8px;color:#2e2630;letter-spacing:-0.160px;">Автосумма</span>
<svg class="a" style="left:1691.9px;top:60.1px" width="6" height="4"><path d="M0.300 0.300H5.700L3 3.300Z" fill="#646464"/></svg>
<svg class="a" style="left:1612px;top:76px" width="14" height="17"><rect x="0.500" y="0.500" width="12" height="15" fill="#dbe6f8" stroke="#5d7fc0"/><rect x="0.500" y="0.500" width="12" height="2.500" fill="#5d7fc0"/><path d="M6.500 4.500v5" stroke="#2d62c8" stroke-width="3"/><path d="M2 8.500h9L6.500 13.500z" fill="#2d62c8"/></svg>
<span class="t" style="left:1629.8px;top:76.9px;font-size:11.5px;line-height:15.8px;color:#2e2630;letter-spacing:0.105px;">Заполнить</span>
<svg class="a" style="left:1691.1px;top:82.0px" width="6" height="4"><path d="M0.300 0.300H5.700L3 3.300Z" fill="#646464"/></svg>
<svg class="a" style="left:1612px;top:99px" width="16" height="14"><defs><linearGradient id="er" x1="0" y1="0" x2="0" y2="1"><stop offset="0" stop-color="#ffffff"/><stop offset=".6" stop-color="#e9edf5"/><stop offset="1" stop-color="#9aa6bd"/></linearGradient></defs><g transform="translate(6.800 6.400) rotate(-36)"><rect x="-6.800" y="-3.400" width="13.600" height="6.800" rx="2" fill="url(#er)" stroke="#5d6b86" stroke-width=".9"/><path d="M-2.500 -3.400V3.400" stroke="#8a96ad" stroke-width=".7"/></g><path d="M6 12.500H14.500" stroke="#111" stroke-width="1.100"/></svg>
<span class="t" style="left:1629.8px;top:99.2px;font-size:11.5px;line-height:15.8px;color:#2e2630;letter-spacing:0.117px;">Очистить</span>
<svg class="a" style="left:1685.0px;top:104.0px" width="6" height="4"><path d="M0.300 0.300H5.700L3 3.300Z" fill="#646464"/></svg>
<svg class="a" style="left:1719px;top:54px" width="33" height="31"><defs><linearGradient id="fn" x1="0" x2="1"><stop offset="0" stop-color="#e4e4e4"/><stop offset=".45" stop-color="#bdbdbd"/><stop offset="1" stop-color="#6f6f6f"/></linearGradient></defs><path d="M11.800 6.200H31.100L21 16.800V26.500H16.200V16.800z" fill="url(#fn)" stroke="#777" stroke-width=".6"/><path d="M11.800 6.500H31.100" stroke="#6a6a6a" stroke-width="1"/><text x="2.600" y="13.900" font-family="Liberation Serif" font-weight="bold" font-size="19" fill="#2c4fa8" textLength="12.500" lengthAdjust="spacingAndGlyphs">A</text><text x="0.800" y="29.200" font-family="Liberation Serif" font-weight="bold" font-size="19" fill="#8c2f2f" textLength="13.400" lengthAdjust="spacingAndGlyphs">Я</text></svg>
<span class="t" style="left:1703.1px;top:89.4px;font-size:11.5px;line-height:15.8px;color:#2e2630;letter-spacing:0.189px;">Сортировка</span>
<span class="t" style="left:1706.0px;top:102.4px;font-size:11.5px;line-height:15.8px;color:#2e2630;letter-spacing:0.116px;">и фильтр</span>
<svg class="a" style="left:1758.7px;top:107.0px" width="6" height="4"><path d="M0.300 0.300H5.700L3 3.300Z" fill="#646464"/></svg>
<svg class="a" style="left:1787px;top:56.5px" width="28" height="25"><defs><linearGradient id="bn" x1="0" x2="1"><stop offset="0" stop-color="#6f88bb"/><stop offset=".35" stop-color="#c9d6ee"/><stop offset=".7" stop-color="#6f88bb"/><stop offset="1" stop-color="#2f4677"/></linearGradient></defs><g fill="url(#bn)" stroke="#2f4677" stroke-width=".5"><rect x="8.4" y="0.300" width="3.400" height="4.500" rx="1.200"/><rect x="5.8999999999999995" y="3.700" width="7.400" height="3.800" rx="1.300"/><rect x="3.3" y="6.700" width="10.300" height="6.400" rx="1.500"/><rect x="0.3" y="12.500" width="10.900" height="11.700" rx="1.800"/><path d="M0.8 21.500h9.900" stroke="#2f4677" stroke-width=".6" opacity=".6"/></g><g fill="url(#bn)" stroke="#2f4677" stroke-width=".5"><rect x="15.799999999999999" y="0.300" width="3.400" height="4.500" rx="1.200"/><rect x="14.799999999999999" y="3.700" width="7.400" height="3.800" rx="1.300"/><rect x="14.299999999999999" y="6.700" width="10.300" height="6.400" rx="1.500"/><rect x="16.2" y="12.500" width="10.900" height="11.700" rx="1.800"/><path d="M16.7 21.500h9.900" stroke="#2f4677" stroke-width=".6" opacity=".6"/></g><rect x="10.500" y="12.800" width="6.500" height="2.400" fill="#3c5690"/></svg>
<span class="t" style="left:1779.9px;top:89.4px;font-size:11.5px;line-height:15.8px;color:#2e2630;letter-spacing:0.109px;">Найти и</span>
<span class="t" style="left:1773.0px;top:102.4px;font-size:11.5px;line-height:15.8px;color:#2e2630;letter-spacing:-0.124px;">выделить</span>
<svg class="a" style="left:1825.7px;top:107.0px" width="6" height="4"><path d="M0.300 0.300H5.700L3 3.300Z" fill="#646464"/></svg>
<svg class="a" style="left:17px;top:54px" width="28" height="32"><defs><linearGradient id="pb" x1="0" y1="0" x2="0" y2="1"><stop offset="0" stop-color="#f1c56c"/><stop offset="1" stop-color="#f6d084"/></linearGradient><linearGradient id="pp" x1="0" y1="0" x2="1" y2="1"><stop offset="0" stop-color="#ffffff"/><stop offset="1" stop-color="#e4eaf4"/></linearGradient></defs><rect x="1.500" y="3.500" width="24" height="24.500" rx="2" fill="#000" opacity=".10"/><rect x="0.500" y="2.500" width="23.500" height="24.500" rx="2" fill="url(#pb)" stroke="#c79e58"/><path d="M9 4.500c0-2.500 1.200-4 3-4s3 1.500 3 4z" fill="#dfe3e9" stroke="#7a8597" stroke-width=".9"/><circle cx="12" cy="2.800" r=".9" fill="#8a5a2a"/><rect x="5" y="4.200" width="14" height="2.600" rx=".8" fill="#eef0f4" stroke="#7a8597" stroke-width=".9"/><path d="M9.500 12.500H21.500L26.500 17.500V30.500H9.500z" fill="#000" opacity=".12"/><path d="M8.500 11.500H20.500L25.500 16.500V29.500H8.500z" fill="url(#pp)" stroke="#6f84aa"/><path d="M20.500 11.500V16.500H25.500z" fill="#dbe3f0" stroke="#6f84aa" stroke-linejoin="round"/><path d="M11 14.500H18M11 16.500H18M11 18.500H18M11 20.500H22.500M11 22.500H22.500M11 24.500H22.500M11 26.500H22.500" stroke="#c3ccdb" stroke-width=".9"/></svg>
<svg class="a" style="left:60px;top:55px" width="13" height="14"><path d="M3.200 0.300L7 7.500M8.800 0.300L5 7.500" stroke="#767e8a" stroke-width="1.500" fill="none" stroke-linecap="round"/><ellipse cx="3.600" cy="10.700" rx="1.700" ry="2.100" fill="none" stroke="#2b4fc0" stroke-width="1.600"/><ellipse cx="8.600" cy="10.500" rx="1.700" ry="2.100" fill="none" stroke="#2b4fc0" stroke-width="1.600"/><path d="M5 8.300l1 .8 1-.8" stroke="#2b4fc0" fill="none"/></svg>
<svg class="a" style="left:59px;top:77px" width="16" height="14"><path d="M0.500 0.500H4.500L6.500 2.500V9.500H0.500z" fill="#fdfdff" stroke="#8a9bbd" stroke-width=".9"/><path d="M2 3.500H4M2 5.500H5M2 7.500H5" stroke="#5b84d8" stroke-width=".9"/><path d="M6.500 3.500H12L14.500 6V12.500H6.500z" fill="#fdfdff" stroke="#2a4a9a"/><path d="M12 3.500V6H14.500" fill="#cfdaf0" stroke="#2a4a9a" stroke-width=".8"/><path d="M8 6.500H10.500M8 8.500H13M8 10.500H13" stroke="#3d6ad0" stroke-width=".9"/></svg>
<svg class="a" style="left:59px;top:99px" width="17" height="14"><defs><linearGradient id="br" x1="0" y1="0" x2="1" y2="1"><stop offset="0" stop-color="#fff6b4"/><stop offset="1" stop-color="#cfb347"/></linearGradient></defs><path d="M0.300 6.200L6.200 3l5.700 5.100L7.500 13.500c-.8.300-1.300 0-1.800-.8z" fill="url(#br)" stroke="#8d7a32" stroke-width=".8" stroke-linejoin="round"/><path d="M6.200 3L11.600 1.100 14.500 5.600 11.900 8.100z" fill="#b9bdc5" stroke="#5c6169" stroke-width=".7"/><path d="M8 3.500l3 3M9.800 2.500l3 3.300" stroke="#7d828b" stroke-width=".6"/><path d="M11.300 1.200L15 0.200 15.800 1.800 13.600 4.400z" fill="#5a4fb5" stroke="#3d3588" stroke-width=".5"/></svg>
</div>

<div id="fbar"><div id="namebox"></div><div id="fxarea"></div><div id="finput"></div><div id="fexp"></div><div id="fline"></div>
<span class="t" style="left:62.500px;top:142px;font-size:13px;line-height:16px;color:#000;letter-spacing:-0.2px">C1</span>
<svg class="a" style="left:146.500px;top:147.500px" width="8" height="5"><path d="M0 0.500H8L4 4.800Z" fill="#2d2d2d"/></svg>
<svg class="a" style="left:165px;top:144px" width="10" height="10"><defs><linearGradient id="cg" x1="0" x2="0" y1="0" y2="1"><stop offset="0" stop-color="#a9adb4"/><stop offset="1" stop-color="#eceef1"/></linearGradient></defs><circle cx="4.800" cy="4.900" r="4" fill="url(#cg)"/></svg>
<span class="t" style="left:226px;top:139px;font-size:15px;line-height:18px;color:#222;font-family:'Liberation Serif',serif;font-style:italic;font-weight:bold">f<span style="font-size:10px;position:relative;top:1px;left:-1px">x</span></span>
<svg class="a" style="left:1908px;top:146px" width="9" height="6"><path d="M0.500 0.500L4.500 4.500 8.500 0.500" stroke="#333" stroke-width="1.600" fill="none"/></svg>
</div>

<div id="grid">
<div id="colhdr">
<div class="corner"><svg width="26" height="20"><path d="M21 5 L21 16 L10 16 Z" fill="#b8bfc8"/></svg></div>
<div class="ch" style="left:26px;width:64px">A</div>
<div class="ch" style="left:90px;width:64px">B</div>
<div class="ch sel" style="left:154px;width:64px">C</div>
<div class="ch" style="left:218px;width:64px">D</div>
<div class="ch" style="left:282px;width:64px">E</div>
<div class="ch" style="left:346px;width:64px">F</div>
<div class="ch" style="left:410px;width:64px">G</div>
<div class="ch" style="left:474px;width:64px">H</div>
<div class="ch" style="left:538px;width:64px">I</div>
<div class="ch" style="left:602px;width:64px">J</div>
<div class="ch" style="left:666px;width:64px">K</div>
<div class="ch" style="left:730px;width:64px">L</div>
<div class="ch" style="left:794px;width:64px">M</div>
<div class="ch" style="left:858px;width:64px">N</div>
<div class="ch" style="left:922px;width:64px">O</div>
<div class="ch" style="left:986px;width:64px">P</div>
<div class="ch" style="left:1050px;width:64px">Q</div>
<div class="ch" style="left:1114px;width:64px">R</div>
<div class="ch" style="left:1178px;width:64px">S</div>
<div class="ch" style="left:1242px;width:64px">T</div>
<div class="ch" style="left:1306px;width:64px">U</div>
<div class="ch" style="left:1370px;width:64px">V</div>
<div class="ch" style="left:1434px;width:64px">W</div>
<div class="ch" style="left:1498px;width:64px">X</div>
<div class="ch" style="left:1562px;width:64px">Y</div>
<div class="ch" style="left:1626px;width:64px">Z</div>
<div class="ch" style="left:1690px;width:64px">AA</div>
<div class="ch" style="left:1754px;width:64px">AB</div>
<div class="ch" style="left:1818px;width:64px">AC</div>
<div class="ch" style="left:1882px;width:64px">AD</div>
</div>
<div id="rowhdr">
<div class="rh sel" style="top:0px">1</div>
<div class="rh" style="top:20px">2</div>
<div class="rh" style="top:40px">3</div>
<div class="rh" style="top:60px">4</div>
<div class="rh" style="top:80px">5</div>
<div class="rh" style="top:100px">6</div>
<div class="rh" style="top:120px">7</div>
<div class="rh" style="top:140px">8</div>
<div class="rh" style="top:160px">9</div>
<div class="rh" style="top:180px">10</div>
<div class="rh" style="top:200px">11</div>
<div class="rh" style="top:220px">12</div>
<div class="rh" style="top:240px">13</div>
<div class="rh" style="top:260px">14</div>
<div class="rh" style="top:280px">15</div>
<div class="rh" style="top:300px">16</div>
<div class="rh" style="top:320px">17</div>
<div class="rh" style="top:340px">18</div>
<div class="rh" style="top:360px">19</div>
<div class="rh" style="top:380px">20</div>
<div class="rh" style="top:400px">21</div>
<div class="rh" style="top:420px">22</div>
<div class="rh" style="top:440px">23</div>
<div class="rh" style="top:460px">24</div>
<div class="rh" style="top:480px">25</div>
<div class="rh" style="top:500px">26</div>
<div class="rh" style="top:520px">27</div>
<div class="rh" style="top:540px">28</div>
<div class="rh" style="top:560px">29</div>
<div class="rh" style="top:580px">30</div>
<div class="rh" style="top:600px">31</div>
<div class="rh" style="top:620px">32</div>
<div class="rh" style="top:640px">33</div>
<div class="rh" style="top:660px">34</div>
<div class="rh" style="top:680px">35</div>
<div class="rh" style="top:700px">36</div>
<div class="rh" style="top:720px">37</div>
<div class="rh" style="top:740px">38</div>
<div class="rh" style="top:760px">39</div>
<div class="rh" style="top:780px">40</div>
<div class="rh" style="top:800px">41</div>
</div>
<div id="cells">
<div class="c l" style="left:0;top:0">PWM</div><div class="c l" style="left:64px;top:0">MaxPix</div>
<div class="c r" style="left:0;top:20px">253</div><div class="c r" style="left:64px;top:20px">63</div>
<div class="c r" style="left:0;top:40px">252</div><div class="c r" style="left:64px;top:40px">63</div>
<div class="c r" style="left:0;top:60px">251</div><div class="c r" style="left:64px;top:60px">63</div>
<div class="c r" style="left:0;top:80px">250</div><div class="c r" style="left:64px;top:80px">63</div>
<div class="c r" style="left:0;top:100px">249</div><div class="c r" style="left:64px;top:100px">63</div>
<div class="c r" style="left:0;top:120px">248</div><div class="c r" style="left:64px;top:120px">63</div>
<div class="c r" style="left:0;top:140px">247</div><div class="c r" style="left:64px;top:140px">63</div>
<div class="c r" style="left:0;top:160px">246</div><div class="c r" style="left:64px;top:160px">63</div>
<div class="c r" style="left:0;top:180px">245</div><div class="c r" style="left:64px;top:180px">63</div>
<div class="c r" style="left:0;top:200px">244</div><div class="c r" style="left:64px;top:200px">63</div>
<div class="c r" style="left:0;top:220px">243</div><div class="c r" style="left:64px;top:220px">63</div>
<div class="c r" style="left:0;top:240px">242</div><div class="c r" style="left:64px;top:240px">63</div>
<div class="c r" style="left:0;top:260px">241</div><div class="c r" style="left:64px;top:260px">63</div>
<div class="c r" style="left:0;top:280px">240</div><div class="c r" style="left:64px;top:280px">63</div>
<div class="c r" style="left:0;top:300px">239</div><div class="c r" style="left:64px;top:300px">63</div>
<div class="c r" style="left:0;top:320px">238</div><div class="c r" style="left:64px;top:320px">63</div>
<div class="c r" style="left:0;top:340px">237</div><div class="c r" style="left:64px;top:340px">63</div>
<div class="c r" style="left:0;top:360px">236</div><div class="c r" style="left:64px;top:360px">63</div>
<div class="c r" style="left:0;top:380px">235</div><div class="c r" style="left:64px;top:380px">63</div>
<div class="c r" style="left:0;top:400px">234</div><div class="c r" style="left:64px;top:400px">63</div>
<div class="c r" style="left:0;top:420px">233</div><div class="c r" style="left:64px;top:420px">63</div>
<div class="c r" style="left:0;top:440px">232</div><div class="c r" style="left:64px;top:440px">63</div>
<div class="c r" style="left:0;top:460px">231</div><div class="c r" style="left:64px;top:460px">63</div>
<div class="c r" style="left:0;top:480px">230</div><div class="c r" style="left:64px;top:480px">63</div>
<div class="c r" style="left:0;top:500px">229</div><div class="c r" style="left:64px;top:500px">63</div>
<div class="c r" style="left:0;top:520px">228</div><div class="c r" style="left:64px;top:520px">63</div>
<div class="c r" style="left:0;top:540px">227</div><div class="c r" style="left:64px;top:540px">63</div>
<div class="c r" style="left:0;top:560px">226</div><div class="c r" style="left:64px;top:560px">63</div>
<div class="c r" style="left:0;top:580px">225</div><div class="c r" style="left:64px;top:580px">63</div>
<div class="c r" style="left:0;top:600px">224</div><div class="c r" style="left:64px;top:600px">63</div>
<div class="c r" style="left:0;top:620px">223</div><div class="c r" style="left:64px;top:620px">63</div>
<div class="c r" style="left:0;top:640px">222</div><div class="c r" style="left:64px;top:640px">63</div>
<div class="c r" style="left:0;top:660px">221</div><div class="c r" style="left:64px;top:660px">63</div>
<div class="c r" style="left:0;top:680px">220</div><div class="c r" style="left:64px;top:680px">63</div>
<div class="c r" style="left:0;top:700px">219</div><div class="c r" style="left:64px;top:700px">63</div>
<div class="c r" style="left:0;top:720px">218</div><div class="c r" style="left:64px;top:720px">63</div>
<div class="c r" style="left:0;top:740px">217</div><div class="c r" style="left:64px;top:740px">63</div>
<div class="c r" style="left:0;top:760px">216</div><div class="c r" style="left:64px;top:760px">63</div>
<div class="c r" style="left:0;top:780px">215</div><div class="c r" style="left:64px;top:780px">63</div>
<div class="c r" style="left:0;top:800px">214</div><div class="c r" style="left:64px;top:800px">63</div>
</div>
<div id="selbox"></div><div id="selh"></div>
</div>
<svg id="chart" width="959" height="781" viewBox="183 211 959 781" style="position:absolute;left:183px;top:211px">
<rect x="183.5" y="211.5" width="958" height="780" rx="1" fill="#fff" stroke="#868686"/>
<path d="M220.0 225.5H1040" stroke="#868686" fill="none"/>
<path d="M220.0 347.5H1040" stroke="#868686" fill="none"/>
<path d="M220.0 468.5H1040" stroke="#868686" fill="none"/>
<path d="M220.0 589.5H1040" stroke="#868686" fill="none"/>
<path d="M220.0 710.5H1040" stroke="#868686" fill="none"/>
<path d="M220.0 832.5H1040" stroke="#868686" fill="none"/>
<path d="M220.0 953.5H1040" stroke="#868686" fill="none"/>
<path d="M224.5 225V958" stroke="#868686" fill="none"/>
<path d="M224.5 953.500v4.500M229.5 953.500v4.500M233.5 953.500v4.500M238.5 953.500v4.500M242.5 953.500v4.500M247.5 953.500v4.500M251.5 953.500v4.500M256.5 953.500v4.500M260.5 953.500v4.500M265.5 953.500v4.500M270.5 953.500v4.500M274.5 953.500v4.500M279.5 953.500v4.500M283.5 953.500v4.500M288.5 953.500v4.500M292.5 953.500v4.500M297.5 953.500v4.500M301.5 953.500v4.500M306.5 953.500v4.500M311.5 953.500v4.500M315.5 953.500v4.500M320.5 953.500v4.500M324.5 953.500v4.500M329.5 953.500v4.500M333.5 953.500v4.500M338.5 953.500v4.500M342.5 953.500v4.500M347.5 953.500v4.500M351.5 953.500v4.500M356.5 953.500v4.500M361.5 953.500v4.500M365.5 953.500v4.500M370.5 953.500v4.500M374.5 953.500v4.500M379.5 953.500v4.500M383.5 953.500v4.500M388.5 953.500v4.500M392.5 953.500v4.500M397.5 953.500v4.500M402.5 953.500v4.500M406.5 953.500v4.500M411.5 953.500v4.500M415.5 953.500v4.500M420.5 953.500v4.500M424.5 953.500v4.500M429.5 953.500v4.500M433.5 953.500v4.500M438.5 953.500v4.500M443.5 953.500v4.500M447.5 953.500v4.500M452.5 953.500v4.500M456.5 953.500v4.500M461.5 953.500v4.500M465.5 953.500v4.500M470.5 953.500v4.500M474.5 953.500v4.500M479.5 953.500v4.500M484.5 953.500v4.500M488.5 953.500v4.500M493.5 953.500v4.500M497.5 953.500v4.500M502.5 953.500v4.500M506.5 953.500v4.500M511.5 953.500v4.500M515.5 953.500v4.500M520.5 953.500v4.500M525.5 953.500v4.500M529.5 953.500v4.500M534.5 953.500v4.500M538.5 953.500v4.500M543.5 953.500v4.500M547.5 953.500v4.500M552.5 953.500v4.500M556.5 953.500v4.500M561.5 953.500v4.500M565.5 953.500v4.500M570.5 953.500v4.500M575.5 953.500v4.500M579.5 953.500v4.500M584.5 953.500v4.500M588.5 953.500v4.500M593.5 953.500v4.500M597.5 953.500v4.500M602.5 953.500v4.500M606.5 953.500v4.500M611.5 953.500v4.500M616.5 953.500v4.500M620.5 953.500v4.500M625.5 953.500v4.500M629.5 953.500v4.500M634.5 953.500v4.500M638.5 953.500v4.500M643.5 953.500v4.500M647.5 953.500v4.500M652.5 953.500v4.500M657.5 953.500v4.500M661.5 953.500v4.500M666.5 953.500v4.500M670.5 953.500v4.500M675.5 953.500v4.500M679.5 953.500v4.500M684.5 953.500v4.500M688.5 953.500v4.500M693.5 953.500v4.500M698.5 953.500v4.500M702.5 953.500v4.500M707.5 953.500v4.500M711.5 953.500v4.500M716.5 953.500v4.500M720.5 953.500v4.500M725.5 953.500v4.500M729.5 953.500v4.500M734.5 953.500v4.500M738.5 953.500v4.500M743.5 953.500v4.500M748.5 953.500v4.500M752.5 953.500v4.500M757.5 953.500v4.500M761.5 953.500v4.500M766.5 953.500v4.500M770.5 953.500v4.500M775.5 953.500v4.500M779.5 953.500v4.500M784.5 953.500v4.500M789.5 953.500v4.500M793.5 953.500v4.500M798.5 953.500v4.500M802.5 953.500v4.500M807.5 953.500v4.500M811.5 953.500v4.500M816.5 953.500v4.500M820.5 953.500v4.500M825.5 953.500v4.500M830.5 953.500v4.500M834.5 953.500v4.500M839.5 953.500v4.500M843.5 953.500v4.500M848.5 953.500v4.500M852.5 953.500v4.500M857.5 953.500v4.500M861.5 953.500v4.500M866.5 953.500v4.500M871.5 953.500v4.500M875.5 953.500v4.500M880.5 953.500v4.500M884.5 953.500v4.500M889.5 953.500v4.500M893.5 953.500v4.500M898.5 953.500v4.500M902.5 953.500v4.500M907.5 953.500v4.500M912.5 953.500v4.500M916.5 953.500v4.500M921.5 953.500v4.500M925.5 953.500v4.500M930.5 953.500v4.500M934.5 953.500v4.500M939.5 953.500v4.500M943.5 953.500v4.500M948.5 953.500v4.500M952.5 953.500v4.500M957.5 953.500v4.500M962.5 953.500v4.500M966.5 953.500v4.500M971.5 953.500v4.500M975.5 953.500v4.500M980.5 953.500v4.500M984.5 953.500v4.500M989.5 953.500v4.500M993.5 953.500v4.500M998.5 953.500v4.500M1003.5 953.500v4.500M1007.5 953.500v4.500M1012.5 953.500v4.500M1016.5 953.500v4.500M1021.5 953.500v4.500M1025.5 953.500v4.500M1030.5 953.500v4.500M1034.5 953.500v4.500M1039.5 953.500v4.500" stroke="#868686" fill="none"/>
<text x="213.4" y="229.9" text-anchor="end" class="ct">300</text>
<text x="213.4" y="351.1" text-anchor="end" class="ct">250</text>
<text x="213.4" y="472.9" text-anchor="end" class="ct">200</text>
<text x="213.4" y="593.9" text-anchor="end" class="ct">150</text>
<text x="213.4" y="714.9" text-anchor="end" class="ct">100</text>
<text x="212.5" y="836.1" text-anchor="end" class="ct">50</text>
<text x="212.5" y="957.9" text-anchor="end" class="ct">0</text>
<text transform="translate(231.9 962) rotate(-90)" text-anchor="end" class="ct" letter-spacing="0.500">1</text>
<text transform="translate(250.1 962) rotate(-90)" text-anchor="end" class="ct" letter-spacing="0.500">5</text>
<text transform="translate(268.3 962) rotate(-90)" text-anchor="end" class="ct" letter-spacing="0.500">9</text>
<text transform="translate(286.5 962) rotate(-90)" text-anchor="end" class="ct" letter-spacing="0.500">13</text>
<text transform="translate(304.7 962) rotate(-90)" text-anchor="end" class="ct" letter-spacing="0.500">17</text>
<text transform="translate(322.9 962) rotate(-90)" text-anchor="end" class="ct" letter-spacing="0.500">21</text>
<text transform="translate(341.2 962) rotate(-90)" text-anchor="end" class="ct" letter-spacing="0.500">25</text>
<text transform="translate(359.4 962) rotate(-90)" text-anchor="end" class="ct" letter-spacing="0.500">29</text>
<text transform="translate(377.6 962) rotate(-90)" text-anchor="end" class="ct" letter-spacing="0.500">33</text>
<text transform="translate(395.8 962) rotate(-90)" text-anchor="end" class="ct" letter-spacing="0.500">37</text>
<text transform="translate(414.0 962) rotate(-90)" text-anchor="end" class="ct" letter-spacing="0.500">41</text>
<text transform="translate(432.2 962) rotate(-90)" text-anchor="end" class="ct" letter-spacing="0.500">45</text>
<text transform="translate(450.4 962) rotate(-90)" text-anchor="end" class="ct" letter-spacing="0.500">49</text>
<text transform="translate(468.6 962) rotate(-90)" text-anchor="end" class="ct" letter-spacing="0.500">53</text>
<text transform="translate(486.8 962) rotate(-90)" text-anchor="end" class="ct" letter-spacing="0.500">57</text>
<text transform="translate(505.1 962) rotate(-90)" text-anchor="end" class="ct" letter-spacing="0.500">61</text>
<text transform="translate(523.3 962) rotate(-90)" text-anchor="end" class="ct" letter-spacing="0.500">65</text>
<text transform="translate(541.5 962) rotate(-90)" text-anchor="end" class="ct" letter-spacing="0.500">69</text>
<text transform="translate(559.7 962) rotate(-90)" text-anchor="end" class="ct" letter-spacing="0.500">73</text>
<text transform="translate(577.9 962) rotate(-90)" text-anchor="end" class="ct" letter-spacing="0.500">77</text>
<text transform="translate(596.1 962) rotate(-90)" text-anchor="end" class="ct" letter-spacing="0.500">81</text>
<text transform="translate(614.3 962) rotate(-90)" text-anchor="end" class="ct" letter-spacing="0.500">85</text>
<text transform="translate(632.5 962) rotate(-90)" text-anchor="end" class="ct" letter-spacing="0.500">89</text>
<text transform="translate(650.8 962) rotate(-90)" text-anchor="end" class="ct" letter-spacing="0.500">93</text>
<text transform="translate(669.0 962) rotate(-90)" text-anchor="end" class="ct" letter-spacing="0.500">97</text>
<text transform="translate(687.2 962) rotate(-90)" text-anchor="end" class="ct" letter-spacing="0.500">101</text>
<text transform="translate(705.4 962) rotate(-90)" text-anchor="end" class="ct" letter-spacing="0.500">105</text>
<text transform="translate(723.6 962) rotate(-90)" text-anchor="end" class="ct" letter-spacing="0.500">109</text>
<text transform="translate(741.8 962) rotate(-90)" text-anchor="end" class="ct" letter-spacing="0.500">113</text>
<text transform="translate(760.0 962) rotate(-90)" text-anchor="end" class="ct" letter-spacing="0.500">117</text>
<text transform="translate(778.2 962) rotate(-90)" text-anchor="end" class="ct" letter-spacing="0.500">121</text>
<text transform="translate(796.5 962) rotate(-90)" text-anchor="end" class="ct" letter-spacing="0.500">125</text>
<text transform="translate(814.7 962) rotate(-90)" text-anchor="end" class="ct" letter-spacing="0.500">129</text>
<text transform="translate(832.9 962) rotate(-90)" text-anchor="end" class="ct" letter-spacing="0.500">133</text>
<text transform="translate(851.1 962) rotate(-90)" text-anchor="end" class="ct" letter-spacing="0.500">137</text>
<text transform="translate(869.3 962) rotate(-90)" text-anchor="end" class="ct" letter-spacing="0.500">141</text>
<text transform="translate(887.5 962) rotate(-90)" text-anchor="end" class="ct" letter-spacing="0.500">145</text>
<text transform="translate(905.7 962) rotate(-90)" text-anchor="end" class="ct" letter-spacing="0.500">149</text>
<text transform="translate(923.9 962) rotate(-90)" text-anchor="end" class="ct" letter-spacing="0.500">153</text>
<text transform="translate(942.2 962) rotate(-90)" text-anchor="end" class="ct" letter-spacing="0.500">157</text>
<text transform="translate(960.4 962) rotate(-90)" text-anchor="end" class="ct" letter-spacing="0.500">161</text>
<text transform="translate(978.6 962) rotate(-90)" text-anchor="end" class="ct" letter-spacing="0.500">165</text>
<text transform="translate(996.8 962) rotate(-90)" text-anchor="end" class="ct" letter-spacing="0.500">169</text>
<text transform="translate(1015.0 962) rotate(-90)" text-anchor="end" class="ct" letter-spacing="0.500">173</text>
<text transform="translate(1033.2 962) rotate(-90)" text-anchor="end" class="ct" letter-spacing="0.500">177</text>
<polyline points="226.48,339.42 231.03,341.85 235.58,344.27 240.14,346.70 244.69,349.13 249.24,351.55 253.79,353.98 258.35,356.40 262.90,358.83 267.45,361.26 272.01,363.68 276.56,366.11 281.11,368.53 285.67,370.96 290.22,373.39 294.77,375.81 299.33,378.24 303.88,380.66 308.43,383.09 312.98,385.52 317.54,387.94 322.09,390.37 326.64,392.79 331.20,395.22 335.75,397.65 340.30,400.07 344.86,402.50 349.41,404.92 353.96,407.35 358.52,409.78 363.07,412.20 367.62,414.63 372.17,417.05 376.73,419.48 381.28,421.91 385.83,424.33 390.39,426.76 394.94,429.18 399.49,431.61 404.05,434.04 408.60,436.46 413.15,438.89 417.71,441.31 422.26,443.74 426.81,446.17 431.36,448.59 435.92,451.02 440.47,453.44 445.02,455.87 449.58,458.30 454.13,460.72 458.68,463.15 463.24,465.57 467.79,468.00 472.34,470.43 476.90,472.85 481.45,475.28 486.00,477.70 490.55,480.13 495.11,482.56 499.66,484.98 504.21,487.41 508.77,489.83 513.32,492.26 517.87,494.69 522.43,497.11 526.98,499.54 531.53,501.96 536.09,504.39 540.64,506.82 545.19,509.24 549.74,511.67 554.30,514.09 558.85,516.52 563.40,518.95 567.96,521.37 572.51,523.80 577.06,526.22 581.62,528.65 586.17,531.08 590.72,533.50 595.28,535.93 599.83,538.35 604.38,540.78 608.93,543.21 613.49,545.63 618.04,548.06 622.59,550.48 627.15,552.91 631.70,555.34 636.25,557.76 640.81,560.19 645.36,562.61 649.91,565.04 654.47,567.47 659.02,569.89 663.57,572.32 668.12,574.74 672.68,577.17 677.23,579.60 681.78,582.02 686.34,584.45 690.89,586.87 695.44,589.30 700.00,591.73 704.55,594.15 709.10,596.58 713.66,599.00 718.21,601.43 722.76,603.86 727.31,606.28 731.87,608.71 736.42,611.13 740.97,613.56 745.53,615.99 750.08,618.41 754.63,620.84 759.19,623.26 763.74,625.69 768.29,628.12 772.85,630.54 777.40,632.97 781.95,635.39 786.50,637.82 791.06,640.25 795.61,642.67 800.16,645.10 804.72,647.52 809.27,649.95 813.82,652.38 818.38,654.80 822.93,657.23 827.48,659.65 832.04,662.08 836.59,664.51 841.14,666.93 845.69,669.36 850.25,671.78 854.80,674.21 859.35,676.64 863.91,679.06 868.46,681.49 873.01,683.91 877.57,686.34 882.12,688.77 886.67,691.19 891.23,693.62 895.78,696.04 900.33,698.47 904.88,700.90 909.44,703.32 913.99,705.75 918.54,708.17 923.10,710.60 927.65,713.03 932.20,715.45 936.76,717.88 941.31,720.30 945.86,722.73 950.42,725.16 954.97,727.58 959.52,730.01 964.07,732.43 968.63,734.86 973.18,737.29 977.73,739.71 982.29,742.14 986.84,744.56 991.39,746.99 995.95,749.42 1000.50,751.84 1005.05,754.27 1009.61,756.69 1014.16,759.12 1018.71,761.55 1023.26,763.97 1027.82,766.40 1032.37,768.82 1036.92,768.82" fill="none" stroke="#4a7ebb" stroke-width="2.9" stroke-linejoin="round" stroke-linecap="round"/>
<polyline points="226.48,800.36 231.03,800.36 235.58,800.36 240.14,800.36 244.69,800.36 249.24,800.36 253.79,800.36 258.35,800.36 262.90,800.36 267.45,800.36 272.01,800.36 276.56,800.36 281.11,800.36 285.67,800.36 290.22,800.36 294.77,800.36 299.33,800.36 303.88,800.36 308.43,800.36 312.98,800.36 317.54,800.36 322.09,800.36 326.64,800.36 331.20,800.36 335.75,800.36 340.30,800.36 344.86,800.36 349.41,800.36 353.96,800.36 358.52,800.36 363.07,800.36 367.62,800.36 372.17,800.36 376.73,800.36 381.28,800.36 385.83,800.36 390.39,800.36 394.94,800.36 399.49,800.36 404.05,800.36 408.60,800.36 413.15,800.36 417.71,800.36 422.26,800.36 426.81,800.36 431.36,800.36 435.92,800.36 440.47,800.36 445.02,800.36 449.58,800.36 454.13,800.36 458.68,800.36 463.24,802.79 467.79,805.21 472.34,800.36 476.90,800.36 481.45,800.36 486.00,800.36 490.55,800.36 495.11,800.36 499.66,800.36 504.21,800.36 508.77,800.36 513.32,800.36 517.87,800.36 522.43,800.36 526.98,800.36 531.53,800.36 536.09,800.36 540.64,800.36 545.19,800.36 549.74,800.36 554.30,800.36 558.85,800.36 563.40,800.36 567.96,800.36 572.51,800.36 577.06,800.36 581.62,800.36 586.17,800.36 590.72,800.36 595.28,800.36 599.83,800.36 604.38,800.36 608.93,800.36 613.49,800.36 618.04,800.36 622.59,800.36 627.15,800.36 631.70,800.36 636.25,800.36 640.81,802.79 645.36,800.36 649.91,800.36 654.47,800.36 659.02,800.36 663.57,805.21 668.12,800.36 672.68,800.36 677.23,800.36 681.78,800.36 686.34,800.36 690.89,800.36 695.44,800.36 700.00,800.36 704.55,802.79 709.10,807.64 713.66,819.77 718.21,817.34 722.76,817.34 727.31,811.76 731.87,805.94 736.42,800.36 740.97,800.36 745.53,800.36 750.08,800.36 754.63,800.36 759.19,800.36 763.74,800.36 768.29,800.36 772.85,807.64 777.40,814.92 781.95,822.20 786.50,817.34 791.06,829.47 795.61,817.34 800.16,807.64 804.72,805.21 809.27,800.36 813.82,800.36 818.38,800.36 822.93,800.36 827.48,800.36 832.04,800.36 836.59,800.36 841.14,807.64 845.69,825.84 850.25,829.47 854.80,827.05 859.35,827.05 863.91,827.05 868.46,814.92 873.01,802.79 877.57,800.36 882.12,807.64 886.67,805.21 891.23,800.36 895.78,800.36 900.33,800.36 904.88,800.36 909.44,812.49 913.99,822.20 918.54,829.47 923.10,839.18 927.65,822.20 932.20,814.92 936.76,814.92 941.31,800.36 945.86,812.49 950.42,812.49 954.97,810.07 959.52,805.21 964.07,810.07 968.63,805.21 973.18,802.79 977.73,800.36 982.29,805.21 986.84,800.36 991.39,800.36 995.95,800.36 1000.50,810.07 1005.05,817.34 1009.61,822.20 1014.16,839.18 1018.71,819.77 1023.26,819.77 1027.82,824.62 1032.37,834.33 1036.92,834.33" fill="none" stroke="#be4b48" stroke-width="2.9" stroke-linejoin="round" stroke-linecap="round"/>
<path d="M1059.5 588.5H1085.5" stroke="#4a7ebb" stroke-width="2.9" stroke-linecap="round"/>
<path d="M1059.5 613.5H1085.5" stroke="#be4b48" stroke-width="2.9" stroke-linecap="round"/>
<text x="1088" y="592.800" class="ct">PWM</text><text x="1088" y="616.800" class="ct" letter-spacing="0.150">MaxPix</text>
</svg>
<div id="tip"><span>Строка формул</span></div>
<div id="vsb">
 <div class="vsplit"></div>
 <svg class="a" style="left:2px;top:13.500px" width="12" height="6"><path d="M0.800 5.500L5.500 0.500 10.200 5.500Z" fill="#3a3a3a"/></svg><div class="a" style="left:5px;top:3px;width:7px;height:1px;background:#7a7a7a"></div>
 <div class="vthumb"><svg class="a" style="left:3px;top:82px" width="8" height="10"><path d="M0 1.500H8M0 3.500H8M0 5.500H8M0 7.500H8" stroke="#7d8591"/></svg></div>
 <svg class="a" style="left:2px;top:827px" width="12" height="6"><path d="M0.800 0.500L5.500 5.500 10.200 0.500Z" fill="#3a3a3a"/></svg><div class="a" style="left:0;top:838px;width:16px;height:1px;background:#c9ced6"></div><div class="a" style="left:0;top:854px;width:20px;height:1px;background:#8e97a4"></div>
</div>
<div id="tabbar">
 <svg class="a" style="left:5px;top:3px" width="54" height="10"><g fill="#3a3a3a"><rect x="1" y="0.500" width="1.300" height="8.500"/><path d="M7.500 0.500v8.500L3 4.750z"/><path d="M21.500 0.500v8.500L17 4.750z"/><path d="M31 0.500v8.500L35.500 4.750z"/><path d="M45 0.500v8.500L49.500 4.750z"/><rect x="50" y="0.500" width="1.300" height="8.500"/></g></svg>
 <svg class="a" style="left:58px;top:0" width="80" height="15"><defs><linearGradient id="ns" x1="0" y1="0" x2="1" y2="1"><stop offset="0" stop-color="#f4f7fc"/><stop offset="1" stop-color="#9fb0d4"/></linearGradient></defs>
  <path d="M5 0H39.400L24.800 15H5z" fill="#fff"/><path d="M4.500 0V15" stroke="#9aa1ab"/>
  <path d="M39.400 0H71.700L57.300 15H29.500L28 13.500z" fill="#e3e6ec"/><path d="M24.300 15L39.400 -0.500" stroke="#8d949e" stroke-width="1.100" fill="none"/><path d="M39 -0.500H72.200L57.300 15" stroke="#9aa1ab" fill="none" transform="translate(0 0.500)"/>
  <path d="M43 4.500h10.500v7.500h-2l-1 1.500h-2.500l-1-1.500h-1l-1 1.500h-2.500l-1-1.500h-0.500z" fill="url(#ns)" stroke="#5b73a8" stroke-width=".9"/>
  <path d="M43.300 1v7M39.800 4.500h7M40.800 2l5 5M45.800 2l-5 5" stroke="#d8861a" stroke-width="1.100"/><circle cx="43.300" cy="4.500" r="1.300" fill="#fff6d8"/></svg>
 <span class="t" style="left:72.500px;top:1px;font-size:12.500px;line-height:15px;color:#4a3a3a">1</span>
 <div id="hsb"><div class="hsplit" style="left:0"></div>
  <svg class="a" style="left:12px;top:3px" width="6" height="10"><path d="M5.500 0.500v9L0.500 5z" fill="#3a3a3a"/></svg>
  <div class="hthumb"><svg class="a" style="left:338px;top:4px" width="10" height="8"><path d="M1.500 0V8M3.500 0V8M5.500 0V8M7.500 0V8" stroke="#7d8591"/></svg></div>
  <svg class="a" style="left:741px;top:3px" width="6" height="10"><path d="M0.500 0.500v9L5.500 5z" fill="#3a3a3a"/></svg>
  <div class="hsplit" style="left:752px"></div>
 </div>
</div>
<div id="status"><div class="a" style="left:0;top:0;width:1920px;height:21px">
 <span class="t" style="left:8px;top:2px;font-size:12px;line-height:16px;color:#3a3440;letter-spacing:-0.1px">Готово</span>
 <div class="ssep" style="left:54px"></div><div class="ssep" style="left:89px"></div>
 <svg class="a" style="left:63px;top:2px" width="17" height="15"><rect x="2.500" y="1.500" width="13.500" height="12" fill="#fff" stroke="#5d7fc0"/><rect x="3" y="2" width="12.500" height="2.500" fill="#5d7fc0"/><path d="M4.500 7H7.500M8.500 7H11M12 7H14.500M4.500 9H7.500M8.500 9H11M12 9H14.500M4.500 11H7.500M8.500 11H11M12 11H14.500" stroke="#6b8ccc" stroke-width="1.200"/><circle cx="3.500" cy="3.500" r="2.800" fill="#e0392b"/><circle cx="2.800" cy="2.800" r="1" fill="#f7a59c"/></svg>
 <div class="ssep" style="left:1679px"></div>
 <div class="a" style="left:1683px;top:2px;width:19px;height:18px;border:1px solid #e3b345;border-radius:3px;background:linear-gradient(#ffe9a3,#ffd866)"></div>
 <svg class="a" style="left:1686px;top:5px" width="13" height="12"><rect x="0" y="0" width="13" height="12" fill="#5a5f66"/><path d="M1 1h3v2.500H1zM5 1h3v2.500H5zM9 1h3v2.500H9zM1 4.500h3v2.500H1zM5 4.500h3v2.500H5zM9 4.500h3v2.500H9zM1 8h3v3H1zM5 8h3v3H5zM9 8h3v3H9z" fill="#fff"/></svg>
 <svg class="a" style="left:1704px;top:4px" width="14" height="12"><rect x="0.500" y="0.500" width="13" height="11" fill="#b9bdc4" stroke="#6d737b"/><rect x="3.500" y="2.500" width="7" height="7" fill="#fff" stroke="#6d737b"/><path d="M5 4.500h4M5 6h4M5 7.500h4" stroke="#9aa1ab" stroke-width=".7"/></svg>
 <svg class="a" style="left:1723px;top:4px" width="14" height="12"><rect x="0.500" y="0.500" width="13" height="11" fill="#b9bdc4" stroke="#6d737b"/><path d="M2.500 0.500h3v6h-3zM6.500 0.500h3v6h-3z" fill="#fff" stroke="#6d737b"/></svg>
 <span class="t" style="left:1749px;top:2px;font-size:11.500px;line-height:16px;color:#2a2a3a;letter-spacing:-0.6px">100%</span>
 <svg class="a" style="left:1782px;top:0" width="138" height="18"><path d="M18 9.500H118" stroke="#8d939c"/><path d="M18 10.500H118" stroke="#f3f4f6"/>
  <circle cx="9.600" cy="9.300" r="7.300" fill="#fafbfc" stroke="#9298a1"/><path d="M5.500 9.500h8" stroke="#333" stroke-width="2"/>
  <circle cx="126.100" cy="9.300" r="7.300" fill="#fafbfc" stroke="#9298a1"/><path d="M122 9.500h8M126 5.500v8" stroke="#333" stroke-width="2"/>
  <path d="M64.500 3.500h8v8l-4 4.500-4-4.500z" fill="#f4f5f7" stroke="#7d8591"/></svg>
</div></div>

</body></html>
